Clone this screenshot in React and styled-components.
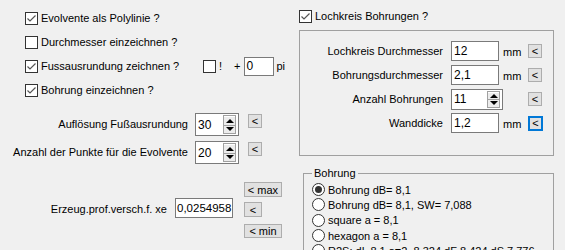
import React from 'react';
import styled, { createGlobalStyle, css } from 'styled-components';

const Global = createGlobalStyle`
  html, body { margin: 0; padding: 0; background: #f0f0f0; }
  body { font-family: "Liberation Sans", Arial, sans-serif; font-size: 11px; color: #000; }
  * { box-sizing: border-box; }
`;

const Page = styled.div`
  width: 565px;
  height: 250px;
  overflow: hidden;
  display: flex;
  background: #f0f0f0;
`;

const LeftCol = styled.div`
  width: 299px;
  flex: none;
  padding-top: 6px;
`;

const RightCol = styled.div`
  width: 266px;
  flex: none;
  padding-top: 4px;
`;

const CheckList = styled.div`
  padding-left: ${p => p.$indent}px;
`;

const CheckRow = styled.div`
  display: flex;
  align-items: center;
  height: 24px;
  white-space: nowrap;
`;

const Box = styled.span`
  width: 13px;
  height: 13px;
  border: 1px solid #333;
  background: #fff;
  display: inline-flex;
  align-items: center;
  justify-content: center;
  flex: none;
  margin-right: 3px;
`;

const Label = styled.span`
  display: inline-block;
  ${p => p.$width && css`width: ${p.$width}px;`}
`;

const Check = ({ checked }) => (
  <Box>
    {checked && (
      <svg width="11" height="11" viewBox="0 0 11 11">
        <polyline points="1.5,5.5 4,8 9.5,2.5" fill="none" stroke="#555" strokeWidth="1.2" />
      </svg>
    )}
  </Box>
);

const Glyph = styled.span`
  margin-left: ${p => p.$ml || 0}px;
`;

const Field = styled.div`
  width: ${p => p.$w}px;
  height: ${p => p.$h || 20}px;
  border: 1px solid #7a7a7a;
  background: #fff;
  padding-left: ${p => p.$pl ?? 2}px;
  display: flex;
  align-items: center;
  flex: none;
  margin-left: ${p => p.$ml || 0}px;
  font-size: ${p => p.$fs || 12}px;
  white-space: nowrap;
  overflow: hidden;
`;

const SpinField = styled.div`
  width: ${p => p.$w}px;
  height: ${p => p.$h}px;
  border: 1px solid #7a7a7a;
  background: #fff;
  padding-left: 2px;
  padding-right: 2px;
  display: flex;
  align-items: center;
  justify-content: space-between;
  flex: none;
  font-size: 12px;
`;

const SpinButtons = styled.div`
  width: 13px;
  height: calc(100% - 2px);
  display: flex;
  flex-direction: column;
  border: 1px solid #a0a0a0;
  background: #e6e6e6;
`;

const SpinHalf = styled.div`
  flex: 1;
  display: flex;
  align-items: center;
  justify-content: center;
  background: #ececec;
  border-top: 1px solid #fff;
  ${p => p.$down && css`border-top: 1px solid #a0a0a0;`}
`;

const Tri = styled.span`
  width: 0;
  height: 0;
  border-left: 4px solid transparent;
  border-right: 4px solid transparent;
  ${p => p.$down
    ? css`border-top: 4px solid #000;`
    : css`border-bottom: 4px solid #000;`}
`;

const Spinner = ({ value, w, h }) => (
  <SpinField $w={w} $h={h}>
    <span>{value}</span>
    <SpinButtons>
      <SpinHalf><Tri /></SpinHalf>
      <SpinHalf $down><Tri $down /></SpinHalf>
    </SpinButtons>
  </SpinField>
);

const SmallButton = styled.button`
  width: ${p => p.$w || 14}px;
  height: ${p => p.$h || 14}px;
  padding: 0;
  margin: ${p => p.$mt || 0}px 0 0 0;
  flex: none;
  background: #e1e1e1;
  border: 1px solid #adadad;
  font-family: "Liberation Sans", Arial, sans-serif;
  font-size: 11px;
  color: #000;
  display: flex;
  align-items: center;
  justify-content: center;
  white-space: pre;
  ${p => p.$focus && css`border: 2px solid #0078d7;`}
`;

const SpinRow = styled.div`
  display: flex;
  align-items: flex-start;
  height: 28px;
  white-space: nowrap;
`;

const RowLabel = styled.span`
  width: ${p => p.$w}px;
  text-align: right;
  flex: none;
  margin-right: ${p => p.$mr}px;
  padding-top: ${p => p.$pt || 0}px;
  font-size: 11px;
`;

const SpinSection = styled.div`
  margin-top: 8px;
`;

const SpinCell = styled.div`
  margin-top: 3px;
`;

const ButtonSlot = styled.div`
  margin-top: ${p => p.$mt}px;
  margin-left: ${p => p.$ml}px;
`;

const BottomRow = styled.div`
  display: flex;
  align-items: flex-start;
  margin-top: 16px;
  white-space: nowrap;
`;

const XeField = styled.div`
  margin-top: 16px;
  display: flex;
  align-items: center;
`;

const ButtonStack = styled.div`
  display: flex;
  flex-direction: column;
  align-items: flex-start;
  margin-left: 11px;
  gap: 5px;
`;

const GroupBox = styled.div`
  width: 255px;
  height: 126px;
  margin-top: 2px;
  border: 1px solid #a0a0a0;
  padding-top: 8px;
`;

const GroupRow = styled.div`
  display: flex;
  align-items: center;
  height: 24px;
  white-space: nowrap;
`;

const FieldCell = styled.div`
  width: 52px;
  flex: none;
  display: flex;
  align-items: center;
`;

const Unit = styled.span`
  width: 25px;
  flex: none;
  padding-top: 2px;
`;

const Fieldset = styled.fieldset`
  margin: 11px 0 0 4px;
  width: 251px;
  height: 100px;
  border: 1px solid #a0a0a0;
  padding: 2px 0 0 8px;
  min-width: 0;
`;

const Legend = styled.legend`
  padding: 0 2px;
  font-size: 11px;
  line-height: 13px;
`;

const RadioRow = styled.div`
  display: flex;
  align-items: center;
  height: 15.3px;
  white-space: nowrap;
  font-size: 11px;
`;

const RadioCircle = styled.span`
  width: 13px;
  height: 13px;
  border-radius: 50%;
  border: 1px solid #333;
  background: #fff;
  flex: none;
  margin-right: 3px;
  display: flex;
  align-items: center;
  justify-content: center;
  &::after {
    content: "";
    width: 7px;
    height: 7px;
    border-radius: 50%;
    background: ${p => (p.$on ? '#333' : 'transparent')};
  }
`;

const checks = [
  { text: 'Evolvente als Polylinie ?', checked: true },
  { text: 'Durchmesser einzeichnen ?', checked: false },
  { text: 'Fussausrundung zeichnen ?', checked: true, extra: true },
  { text: 'Bohrung einzeichnen ?', checked: true },
];

const lochRows = [
  { label: 'Lochkreis Durchmesser', value: '12', unit: 'mm' },
  { label: 'Bohrungsdurchmesser', value: '2,1', unit: 'mm' },
  { label: 'Anzahl Bohrungen', value: '11', spin: true },
  { label: 'Wanddicke', value: '1,2', unit: 'mm', focus: true },
];

const radios = [
  { text: 'Bohrung dB= 8,1', on: true },
  { text: 'Bohrung dB= 8,1, SW= 7,088' },
  { text: 'square a = 8,1' },
  { text: 'hexagon a = 8,1' },
  { text: 'R2S: dL 8,1 a=2, 8,324  dF 8,424  dS 7,776' },
];

export default function App() {
  return (
    <>
      <Global />
      <Page>
        <LeftCol>
          <CheckList $indent={25}>
            {checks.map(c => (
              <CheckRow key={c.text}>
                <Check checked={c.checked} />
                <Label $width={c.extra ? 162 : undefined}>{c.text}</Label>
                {c.extra && (
                  <>
                    <Check checked={false} />
                    <Glyph>!</Glyph>
                    <Glyph $ml={12}>+</Glyph>
                    <Field $w={30} $h={19} $ml={3}>0</Field>
                    <Glyph $ml={3}>pi</Glyph>
                  </>
                )}
              </CheckRow>
            ))}
          </CheckList>

          <SpinSection>
            {[
              { label: 'Auflösung Fußausrundung', value: '30' },
              { label: 'Anzahl der Punkte für die Evolvente', value: '20' },
            ].map(r => (
              <SpinRow key={r.label}>
                <RowLabel $w={188} $mr={7} $pt={8}>{r.label}</RowLabel>
                <SpinCell>
                  <Spinner value={r.value} w={44} h={23} />
                </SpinCell>
                <ButtonSlot $mt={4} $ml={9}>
                  <SmallButton>&lt;</SmallButton>
                </ButtonSlot>
              </SpinRow>
            ))}
          </SpinSection>

          <BottomRow>
            <RowLabel $w={167} $mr={8} $pt={21}>Erzeug.prof.versch.f. xe</RowLabel>
            <XeField>
              <Field $w={58} $h={20} $pl={1} $fs={11.5}>0,0254958</Field>
            </XeField>
            <ButtonStack>
              <SmallButton $w={38} $h={15}>&lt; max</SmallButton>
              <SmallButton $w={18} $h={15}>&lt;</SmallButton>
              <SmallButton $w={38} $h={14} $mt={2}>&lt; min</SmallButton>
            </ButtonStack>
          </BottomRow>
        </LeftCol>

        <RightCol>
          <CheckRow>
            <Check checked />
            <Label>Lochkreis Bohrungen ?</Label>
          </CheckRow>
          <GroupBox>
            {lochRows.map(r => (
              <GroupRow key={r.label}>
                <RowLabel $w={143} $mr={8}>{r.label}</RowLabel>
                <FieldCell>
                  {r.spin ? (
                    <Spinner value={r.value} w={52} h={21} />
                  ) : (
                    <Field $w={48} $h={20}>{r.value}</Field>
                  )}
                </FieldCell>
                <Unit>{r.unit || ''}</Unit>
                <SmallButton $focus={r.focus} $w={r.focus ? 15 : 14} $h={r.focus ? 15 : 14}>&lt;</SmallButton>
              </GroupRow>
            ))}
          </GroupBox>
          <Fieldset>
            <Legend>Bohrung</Legend>
            {radios.map(r => (
              <RadioRow key={r.text}>
                <RadioCircle $on={r.on} />
                <span>{r.text}</span>
              </RadioRow>
            ))}
          </Fieldset>
        </RightCol>
      </Page>
    </>
  );
}
